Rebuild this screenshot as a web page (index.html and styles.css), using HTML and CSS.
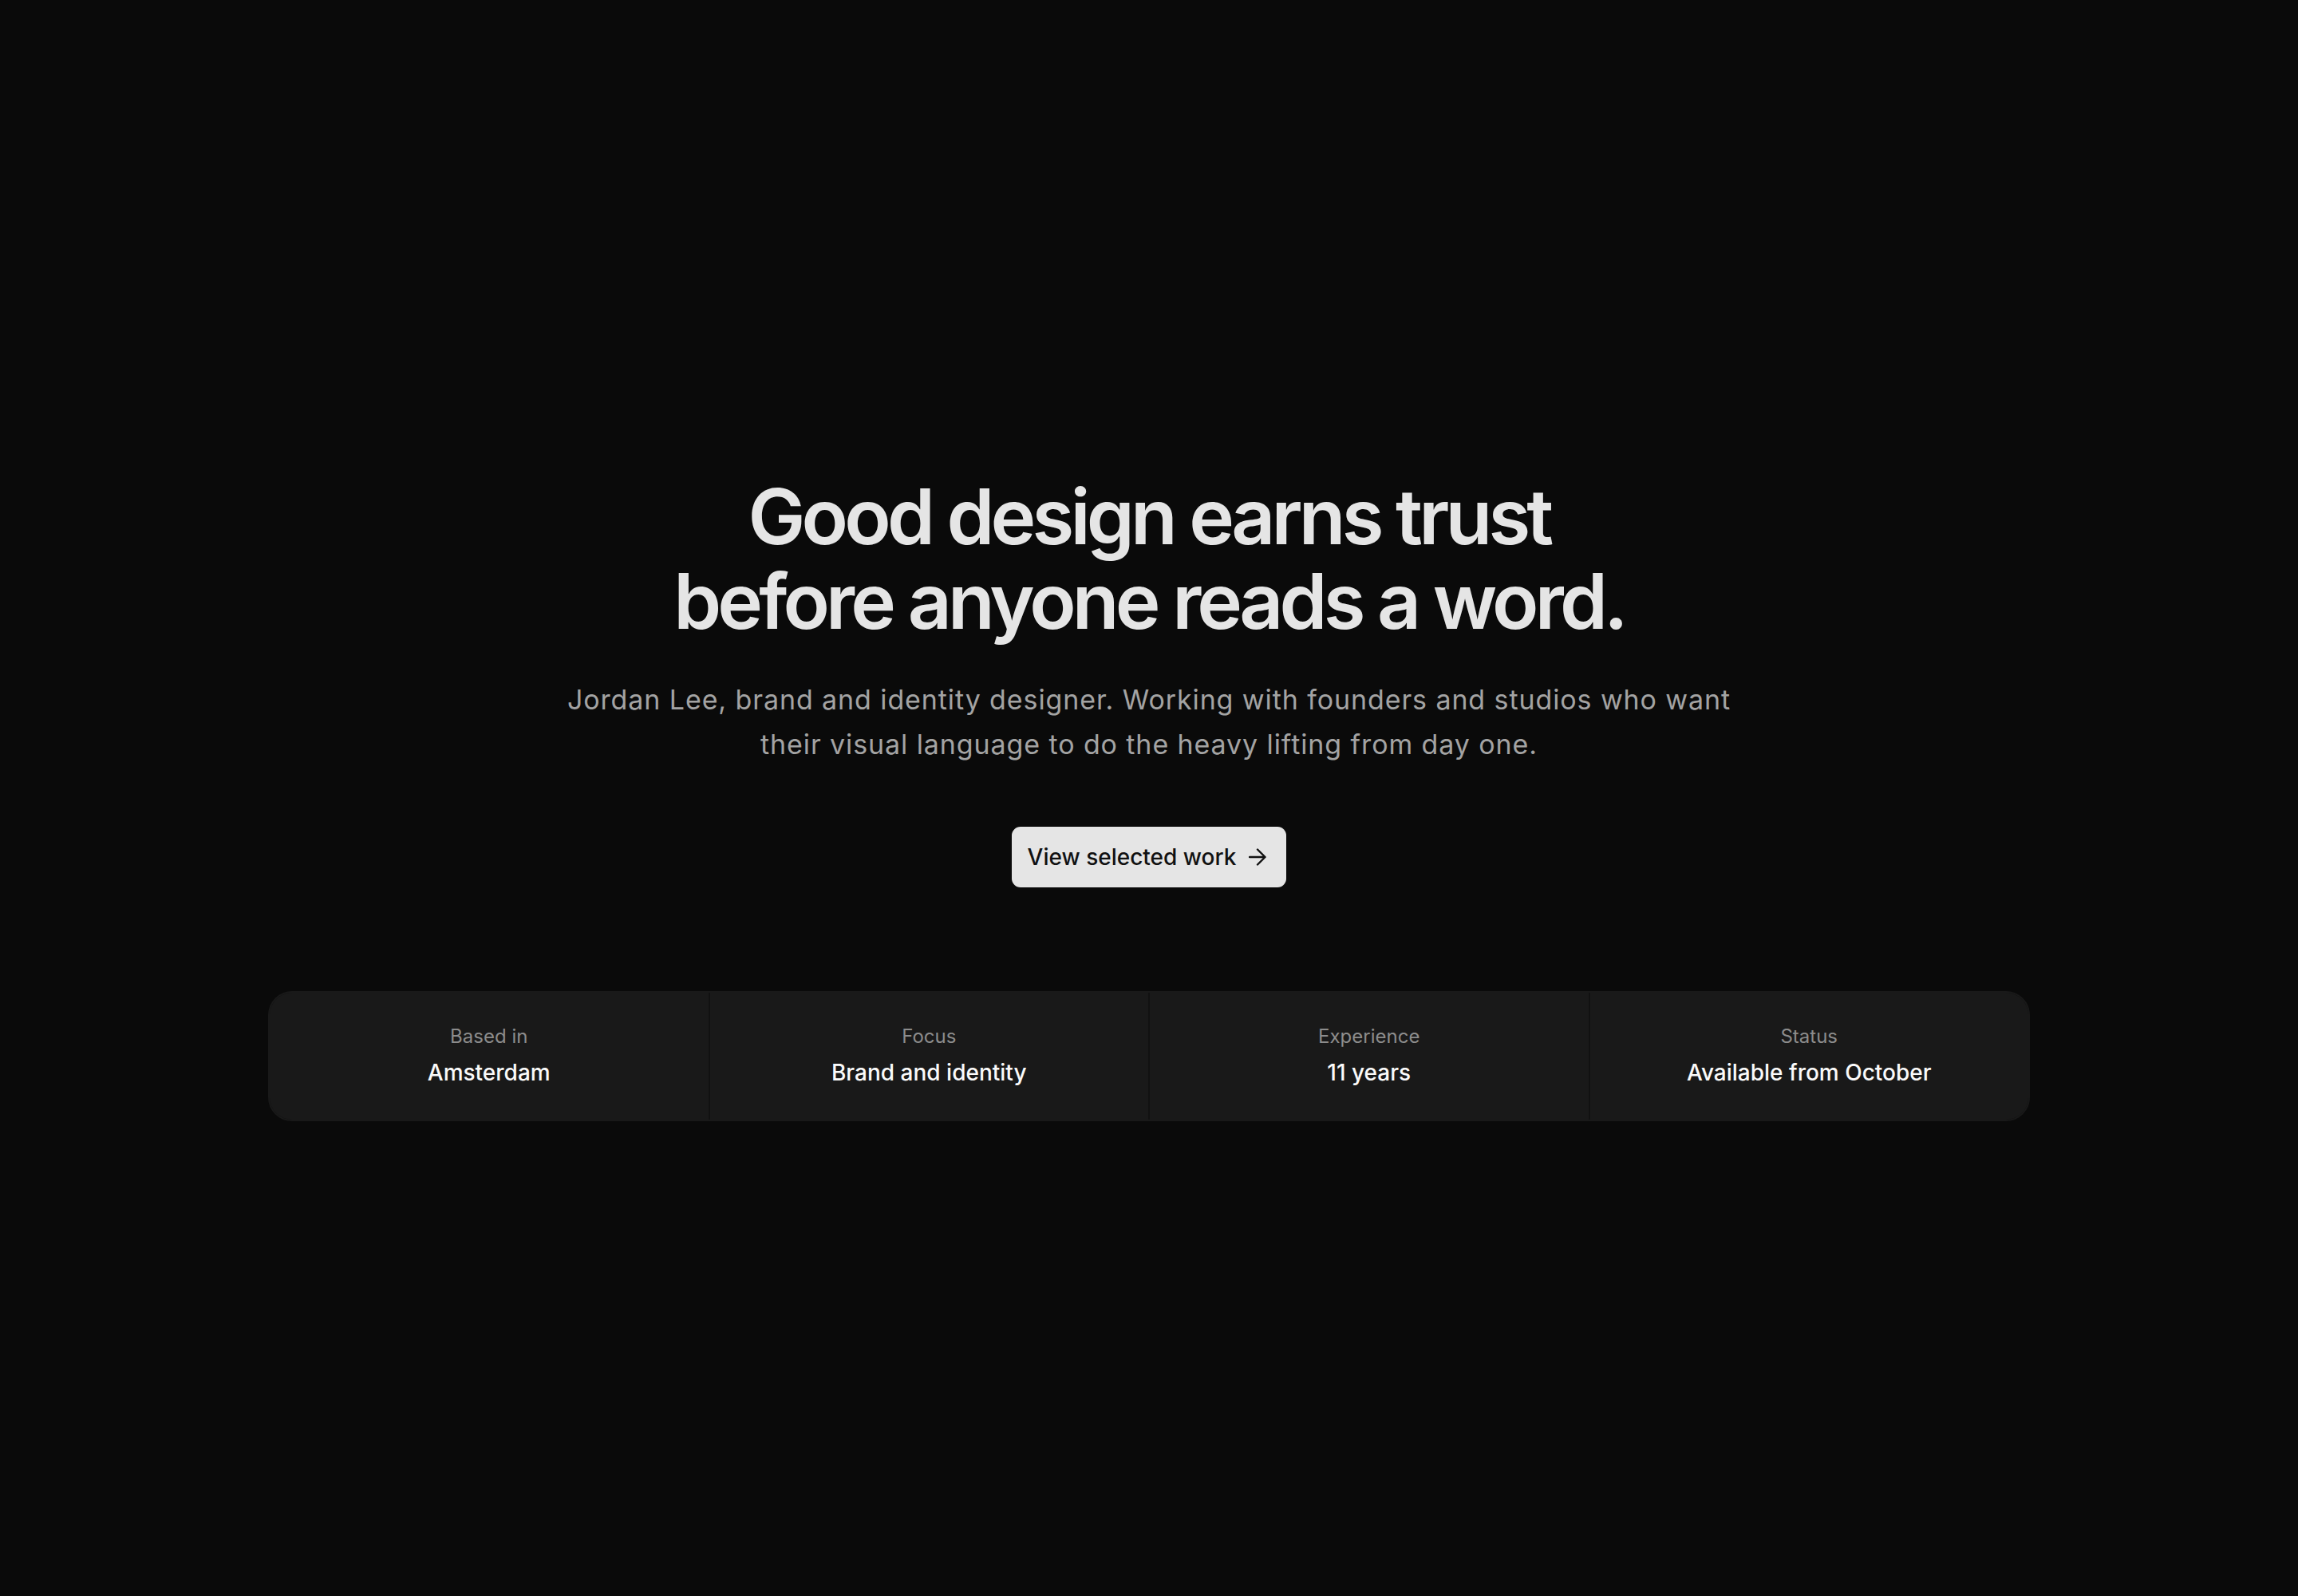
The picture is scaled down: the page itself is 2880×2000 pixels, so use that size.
FILE: index.html
```html
<!DOCTYPE html>
<html lang="en">
<head>
<meta charset="utf-8">
<title>Jordan Lee — Brand and identity designer</title>
<link rel="stylesheet" href="styles.css">
</head>
<body>
<main class="hero">
  <h1 class="headline">Good design earns trust<br>before anyone reads a word.</h1>
  <p class="lede">Jordan Lee, brand and identity designer. Working with founders and studios who want their visual language to do the heavy lifting from day one.</p>
  <a class="cta" href="#work">View selected work
    <svg class="cta-icon" viewBox="0 0 22 22" width="22" height="22" aria-hidden="true"><path d="M1 11H20.5M11 1.5L20.5 11L11 20.5" fill="none" stroke="currentColor" stroke-width="2.4" stroke-linecap="round" stroke-linejoin="round"/></svg>
  </a>
  <dl class="stats">
    <div class="stat"><dt class="stat-label">Based in</dt><dd class="stat-value">Amsterdam</dd></div>
    <div class="stat"><dt class="stat-label">Focus</dt><dd class="stat-value">Brand and identity</dd></div>
    <div class="stat"><dt class="stat-label">Experience</dt><dd class="stat-value">11 years</dd></div>
    <div class="stat"><dt class="stat-label">Status</dt><dd class="stat-value">Available from October</dd></div>
  </dl>
</main>
</body>
</html>
```

FILE: styles.css
```css
* { box-sizing: border-box; }
html, body { margin: 0; padding: 0; }
body {
  background: #0a0a0a;
  color: #e5e5e5;
  font-family: Inter, "Noto Sans", "Liberation Sans", sans-serif;
  -webkit-font-smoothing: antialiased;
}
.hero {
  min-height: 100vh;
  display: flex;
  flex-direction: column;
  align-items: center;
  justify-content: center;
  text-align: center;
  padding: 0 336px;
}
.headline {
  margin: 0;
  font-size: 96px;
  line-height: 1.1;
  font-weight: 600;
  letter-spacing: -0.05em;
  color: #e5e5e5;
}
.lede {
  margin: 42px 0 0;
  max-width: 1490px;
  font-size: 34px;
  line-height: 56px;
  letter-spacing: 0.9px;
  color: #a3a3a3;
}
.cta {
  margin-top: 75px;
  display: inline-flex;
  align-items: center;
  gap: 16px;
  height: 76px;
  padding: 0 25px 0 20px;
  background: #e5e5e5;
  color: #111111;
  border-radius: 11px;
  font-size: 28px;
  font-weight: 500;
  text-decoration: none;
}
.cta-icon { display: block; flex: none; }
.stats {
  margin: 130px 0 0;
  width: 100%;
  max-width: 2208px;
  display: grid;
  grid-template-columns: repeat(4, 1fr);
  gap: 2px;
  background: #111111;
  border: 2px solid #191919;
  border-radius: 30px;
  overflow: hidden;
}
.stat {
  background: #191919;
  padding: 37px 16px 38px;
  display: flex;
  flex-direction: column;
  gap: 7px;
}
.stat-label {
  font-size: 24px;
  line-height: 36px;
  color: #8c8c8c;
}
.stat-value {
  margin: 0;
  font-size: 28px;
  line-height: 41px;
  font-weight: 500;
  color: #fafafa;
}
```
